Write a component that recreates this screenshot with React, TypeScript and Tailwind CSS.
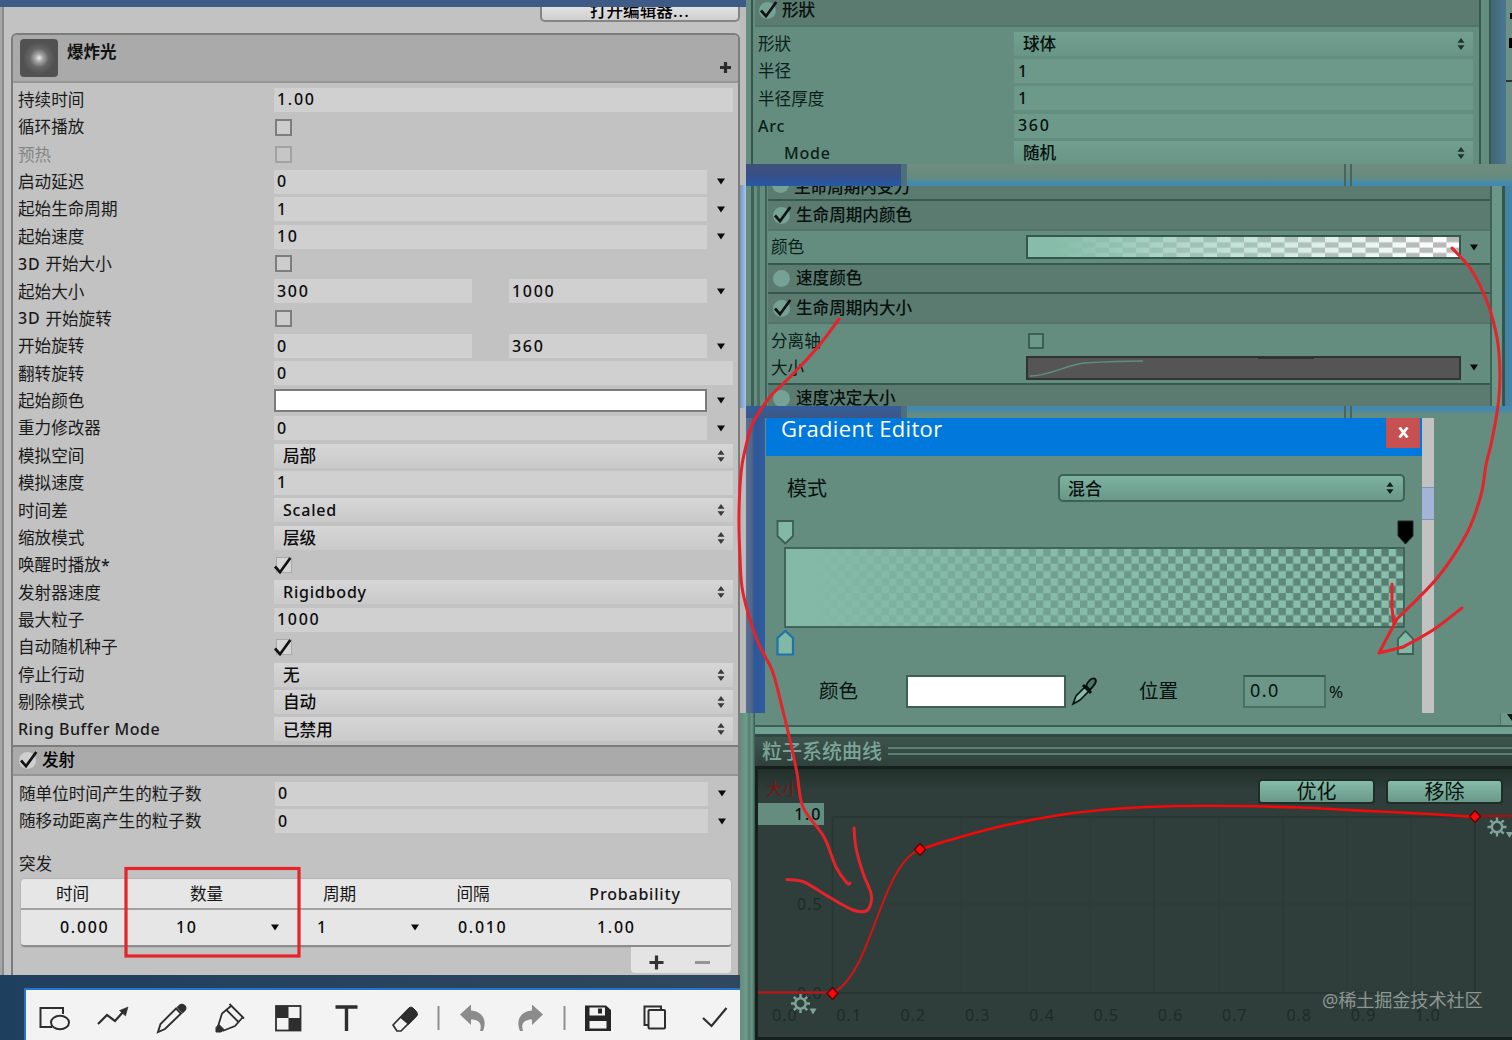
import React from "react";

type Pt = [number, number];

function smooth(p: Pt[]): string {
  let d = `M${p[0][0]} ${p[0][1]}`;
  for (let i = 0; i < p.length - 1; i++) {
    const a = p[i - 1] ?? p[i];
    const b = p[i];
    const c = p[i + 1];
    const e = p[i + 2] ?? c;
    d += `C${b[0] + (c[0] - a[0]) / 6} ${b[1] + (c[1] - a[1]) / 6} ${c[0] - (e[0] - b[0]) / 6} ${c[1] - (e[1] - b[1]) / 6} ${c[0]} ${c[1]}`;
  }
  return d;
}

const Down = () => (
  <svg className="h-[7px] w-[8px]" viewBox="0 0 8 7">
    <path d="M0 0.5H8L4 6.5Z" fill="#0b0b0b" />
  </svg>
);

const UpDown = ({ color = "#3a3a3a" }: { color?: string }) => (
  <svg className="h-[14px] w-[8px]" viewBox="0 0 8 14">
    <path d="M0.5 5.7L4 1L7.5 5.7ZM0.5 8.3L4 13L7.5 8.3Z" fill={color} />
  </svg>
);

const Tick = () => (
  <svg className="h-[19px] w-[19px]" viewBox="0 0 19 19">
    <path d="M2 10.5L7 16.2L17.3 2" fill="none" stroke="#101312" strokeWidth="2.7" />
  </svg>
);

type Kind = "input" | "curve" | "range" | "check" | "checked" | "popup" | "color" | "dim";
type RowData = { l: string; k: Kind; v?: string; v2?: string };

const rows: RowData[] = [
  { l: "持续时间", k: "input", v: "1.00" },
  { l: "循环播放", k: "check" },
  { l: "预热", k: "dim" },
  { l: "启动延迟", k: "curve", v: "0" },
  { l: "起始生命周期", k: "curve", v: "1" },
  { l: "起始速度", k: "curve", v: "10" },
  { l: "3D 开始大小", k: "check" },
  { l: "起始大小", k: "range", v: "300", v2: "1000" },
  { l: "3D 开始旋转", k: "check" },
  { l: "开始旋转", k: "range", v: "0", v2: "360" },
  { l: "翻转旋转", k: "input", v: "0" },
  { l: "起始颜色", k: "color" },
  { l: "重力修改器", k: "curve", v: "0" },
  { l: "模拟空间", k: "popup", v: "局部" },
  { l: "模拟速度", k: "input", v: "1" },
  { l: "时间差", k: "popup", v: "Scaled" },
  { l: "缩放模式", k: "popup", v: "层级" },
  { l: "唤醒时播放*", k: "checked" },
  { l: "发射器速度", k: "popup", v: "Rigidbody" },
  { l: "最大粒子", k: "input", v: "1000" },
  { l: "自动随机种子", k: "checked" },
  { l: "停止行动", k: "popup", v: "无" },
  { l: "剔除模式", k: "popup", v: "自动" },
  { l: "Ring Buffer Mode", k: "popup", v: "已禁用" },
];

/* Latin runs are spaced out, CJK runs are set solid. */
const Txt = ({ s }: { s: string }) => (
  <>
    {s.split(/([\u4e00-\u9fff]+)/).filter(Boolean).map((t, i) =>
      /[\u4e00-\u9fff]/.test(t) ? (
        <span key={i} className="relative top-[0.5px]">{t}</span>
      ) : /^[\d.]+$/.test(t) ? (
        <span key={i} className="text-[16px] font-medium tracking-[1.7px]">{t}</span>
      ) : t.length > 12 ? (
        <span key={i} className="text-[16px] font-medium tracking-[0.5px]">{t}</span>
      ) : (
        <span key={i} className="text-[16px] font-medium tracking-[0.8px]">{t}</span>
      )
    )}
  </>
);

const Box = ({ v, className = "" }: { v?: string; className?: string }) => (
  <div className={"flex h-[24px] items-center bg-[#d0d0d0] pb-px pl-[3px] text-[#0c0c0c] " + className}>
    <Txt s={v ?? ""} />
  </div>
);

function Field({ r }: { r: RowData }) {
  const arrow = (
    <div className="ml-[10px]">
      <Down />
    </div>
  );
  switch (r.k) {
    case "input":
      return <Box v={r.v} className="w-[459px]" />;
    case "curve":
      return (
        <div className="flex items-center">
          <Box v={r.v} className="w-[433px]" />
          {arrow}
        </div>
      );
    case "range":
      return (
        <div className="flex items-center">
          <Box v={r.v} className="mr-[37px] w-[198px]" />
          <Box v={r.v2} className="w-[198px]" />
          {arrow}
        </div>
      );
    case "color":
      return (
        <div className="flex items-center">
          <div className="h-[23px] w-[433px] border-2 border-[#7b7b7b] bg-white" />
          {arrow}
        </div>
      );
    case "popup":
      return (
        <div className="flex h-[24px] w-[459px] items-center justify-between bg-gradient-to-b from-[#d6d6d6] to-[#cacaca] pr-[8px] pl-[9px] font-medium text-[#0c0c0c]">
          <span>
            <Txt s={r.v ?? ""} />
          </span>
          <UpDown />
        </div>
      );
    case "checked":
      return (
        <div className="ml-[2px] flex h-[16px] w-[16px] items-center justify-center border border-[#a8a8a8] bg-[#d6d6d6]">
          <div className="-ml-[3px] shrink-0">
            <Tick />
          </div>
        </div>
      );
    case "dim":
      return <div className="ml-[1px] h-[17px] w-[17px] border-2 border-[#a2a2a2] bg-[#c6c6c6]" />;
    default:
      return <div className="ml-[1px] h-[17px] w-[17px] border-2 border-[#7d7d7d] bg-[#cdcdcd]" />;
  }
}

const Row = ({ r }: { r: RowData }) => (
  <div className="flex h-[27.39px] items-center">
    <div className={"w-[256px] whitespace-nowrap " + (r.k === "dim" ? "text-[#858585]" : "text-[#1a1a1a]")}>
      <Txt s={r.l} />
    </div>
    <Field r={r} />
  </div>
);

const Check = ({ on }: { on: boolean }) => (
  <div className="relative h-[17px] w-[17px] shrink-0 rounded-full bg-[#75a294]">
    {on && (
      <div className="absolute -top-[2px] left-0">
        <Tick />
      </div>
    )}
  </div>
);

const ic = { fill: "none", stroke: "#2e2e2e", strokeWidth: 2 };

function Toolbar() {
  return (
    <div className="flex h-[52px] w-[716px] border-t-2 border-l-2 border-[#2474c8] bg-[#f3f3f3]">
      <svg className="h-[50px] w-[714px]" viewBox="26 990 714 50">
        <g {...ic}>
          <path d="M52 1027H40.5V1008H63V1014" />
          <ellipse cx="60" cy="1022.500" rx="9" ry="6.800" />
          <path d="M98 1024L107 1015L115 1021L123 1012" strokeWidth="2.200" />
          <path d="M128 1007L125.500 1016L119.500 1010.500Z" fill="#2e2e2e" strokeWidth="0.500" />
          <path d="M158 1032L160.500 1024L176 1008.500L181 1013.500L165 1029Z" strokeWidth="1.900" />
          <path d="M177 1007.500Q181 1002 185 1005.500Q188 1009 182.500 1013Z" fill="#2e2e2e" strokeWidth="1" />
          <path d="M217.500 1028L222 1013.500L231 1006M222.500 1031L235 1026L242.500 1017.500" strokeWidth="1.800" />
          <path d="M229.500 1004L244 1018.500M226 1009.500L239 1022.500" strokeWidth="1.800" />
          <path d="M216 1032V1027.500L219 1024.500L224 1029.500L221 1032Z" fill="#2e2e2e" strokeWidth="1" />
          <rect x="276" y="1006" width="24.500" height="24.500" strokeWidth="1.800" />
          <path d="M276 1006H288.500V1018H276ZM288.500 1018H300.500V1030.500H288.500Z" fill="#2e2e2e" stroke="none" />
          <path d="M335.500 1007H357.500M346.500 1007V1031" strokeWidth="3.400" />
          <path d="M393 1025L409 1008.500L417 1015L401 1031H397Z" strokeWidth="1.700" strokeLinejoin="round" />
          <path d="M400.500 1017.500L409 1008Q411 1006 413 1008L416.500 1011.500Q418.500 1014 416 1016.500L408.500 1024.500Z" fill="#2e2e2e" strokeWidth="1" />
        </g>
        <path d="M438.500 1006V1030M564.500 1006V1030" stroke="#8f8f8f" strokeWidth="2" />
        <path d="M460 1014.500L471 1004.500V1010.500C481 1011 488 1019 483 1031H480C482.500 1023 478.500 1019.500 471 1019.500V1025Z" fill="#8b8b8b" />
        <path d="M543 1014.500L532 1004.500V1010.500C522 1011 515 1019 520 1031H523C520.500 1023 524.500 1019.500 532 1019.500V1025Z" fill="#8b8b8b" />
        <path fillRule="evenodd" d="M585 1005.500H606L611 1010V1031H585ZM589.500 1007.500V1015.500H605V1007.500ZM589.500 1021V1028.500H606.500V1021Z" fill="#262626" />
        <rect x="598" y="1008.500" width="4" height="5" fill="#262626" />
        <g {...ic} strokeWidth="2">
          <rect x="648.500" y="1010" width="16.500" height="18.500" rx="1" />
          <path d="M648 1025H644.500V1006.500H661V1010" />
          <path d="M703 1018L711.500 1026L726.500 1008" strokeWidth="2.200" />
        </g>
      </svg>
    </div>
  );
}

function LeftPanel() {
  return (
    <div className="flex h-[1040px] w-[740px] shrink-0 flex-col bg-gradient-to-r from-[#1f3f5e] to-[#30475f]">
      <div className="h-[7px] bg-[#3e5a86]" />
      <div className="flex h-[968px] bg-[#c2c2c2]">
        <div className="h-full w-[4px] border-r-2 border-[#8a8a8a] bg-[#a5a5a5]" />
        <div className="flex w-[736px] flex-col pl-[7px]">
          <div className="flex h-[26px] justify-end">
            <div className="flex h-[15px] w-[200px] items-end justify-center overflow-hidden rounded-b-[5px] border-2 border-t-0 border-[#858585] bg-gradient-to-b from-[#e2e2e2] to-[#cfcfcf] leading-[19px] font-medium text-black">
              打开编辑器<span className="tracking-[1.2px]">...</span>
            </div>
          </div>
          <div className="flex h-[942px] flex-col rounded-t-[6px] border-2 border-b-0 border-[#7c7c7c]">
            <div className="flex h-[48px] shrink-0 justify-between rounded-t-[4px] border-b-2 border-[#969696] bg-[#aaaaaa] pr-[6px] pl-[7px]">
              <div className="flex">
                <div className="mt-[4px] h-[38px] w-[38px] rounded-[4px] bg-[radial-gradient(circle,#ededed_0%,#a5a5a5_15%,#666_35%,#515151_60%)]" />
                <div className="ml-[9px] pt-[6px] text-[16.5px] leading-[22px] font-bold text-[#111]">爆炸光</div>
              </div>
              <svg className="mt-[26px] h-[13px] w-[13px]" viewBox="0 0 13 13">
                <path d="M6.500 1V12M1 6.500H12" stroke="#2b2b2b" strokeWidth="3.200" />
              </svg>
            </div>
            <div className="flex h-[662px] shrink-0 flex-col pt-[3px] pl-[5px]">
              {rows.map((r) => (
                <Row key={r.l} r={r} />
              ))}
            </div>
            <div className="flex h-[31px] shrink-0 items-center border-t-2 border-b-2 border-t-[#7c7c7c] border-b-[#959595] bg-[#aaaaaa] pl-[6px]">
              <div className="h-[17px] w-[17px] rounded-full bg-[#cfcfcf]">
                <div className="-mt-[2px]">
                  <Tick />
                </div>
              </div>
              <div className="ml-[6px] font-medium text-black">发射</div>
            </div>
            <div className="flex shrink-0 flex-col pt-[4px] pl-[6px]">
              <div className="flex flex-col">
                <Row r={{ l: "随单位时间产生的粒子数", k: "curve", v: "0" }} />
                <Row r={{ l: "随移动距离产生的粒子数", k: "curve", v: "0" }} />
              </div>
              <div className="mt-[16px] h-[26px] pt-px leading-[24px] text-[#1d1d1d]">突发</div>
            </div>
            <Bursts />
          </div>
        </div>
      </div>
      <div className="h-[13px]" />
      <div className="pl-[24px]">
        <Toolbar />
      </div>
    </div>
  );
}

function Bursts() {
  return (
    <div className="mt-[2px] ml-[8px] w-[710px]">
      <div className="rounded-[4px] border-b-2 border-[#8b8b8b] bg-[#e6e6e6] shadow-[0_0_0_1px_#b5b5b5]">
        <div className="flex h-[31px] items-center border-b-2 border-[#a2a2a2] pt-[2px] text-[#151515]">
          <div className="w-[103px] text-center">时间</div>
          <div className="w-[165px] text-center">数量</div>
          <div className="w-[101px] text-center">周期</div>
          <div className="w-[166px] text-center">间隔</div>
          <div className="w-[158px] text-center">
            <Txt s="Probability" />
          </div>
        </div>
        <div className="flex h-[35px] items-center text-[#0c0c0c]">
          <div className="w-[115px] pl-[39px]"><Txt s="0.000" /></div>
          <div className="flex w-[181px] items-center justify-between pr-[38px] pl-[40px]">
            <Txt s="10" />
            <Down />
          </div>
          <div className="flex w-[141px] items-center justify-between pr-[39px]">
            <Txt s="1" />
            <Down />
          </div>
          <div className="w-[139px]"><Txt s="0.010" /></div>
          <Txt s="1.00" />
        </div>
      </div>
      <div className="flex justify-end">
        <div className="flex h-[26px] w-[100px] items-center justify-between rounded-b-[4px] bg-[#e4e4e4] pt-[6px] pr-[21px] pl-[18px]">
          <svg className="h-[15px] w-[15px]" viewBox="0 0 15 15">
            <path d="M7.500 0.500V14.500M0.500 7.500H14.500" stroke="#333" strokeWidth="3.200" />
          </svg>
          <div className="h-[3px] w-[15px] bg-[#949494]" />
        </div>
      </div>
    </div>
  );
}

const Popup2 = ({ v }: { v: string }) => (
  <div className="flex h-[24px] w-[459px] items-center justify-between bg-gradient-to-b from-[#729f90] to-[#699586] pr-[8px] pl-[9px]">
    <span className="pt-px font-medium">{v}</span>
    <UpDown color="#1d332c" />
  </div>
);
const Input2 = ({ v }: { v: string }) => (
  <div className="flex h-[24px] w-[459px] items-center bg-[#6d998b] pb-px pl-[4px]">
    <Txt s={v} />
  </div>
);

function ShapePanel() {
  const items: [string, React.ReactNode][] = [
    ["形狀", <Popup2 v="球体" />],
    ["半径", <Input2 v="1" />],
    ["半径厚度", <Input2 v="1" />],
    ["Arc", <Input2 v="360" />],
    ["Mode", <Popup2 v="随机" />],
  ];
  return (
    <div className="flex h-[164px] bg-[#648c7f] text-[#07110e]">
      <div className="w-[7px] border-r-2 border-[#35564c]" />
      <div className="flex h-full w-[728px] flex-col border-r-2 border-[#365a4f] pl-[2px]">
        <div className="flex h-[27px] shrink-0 items-center border-b-2 border-[#50766a] bg-[#5b7a70] pb-[4px] pl-[4px]">
          <Check on />
          <span className="ml-[6px] font-medium">形狀</span>
        </div>
        <div className="flex flex-col pt-[3px]">
          {items.map(([l, f]) => (
            <div key={l} className="flex h-[27.400px] shrink-0 items-center">
              <div className={"w-[259px] text-[#0a1f19] " + (l === "Mode" ? "pl-[29px]" : "pl-[3px]")}>
                <Txt s={l} />
              </div>
              {f}
            </div>
          ))}
        </div>
      </div>
      <div className="w-[10px] border-r-2 border-[#365a4f]" />
      <div className="w-[15px] bg-gradient-to-r from-[#416772] to-[#4b7890]" />
      <div className="flex w-[6px] flex-col items-end bg-[#6f9183] pt-[13px]">
        <div className="h-[6px] w-[2px] bg-black" />
        <div className="mt-[19px] h-[10px] w-[3px] bg-black" />
        <div className="mt-[32px] h-[2px] w-[6px] bg-[#2a3431]" />
      </div>
    </div>
  );
}

function Divider({ low }: { low?: boolean }) {
  return (
    <div className={"flex " + (low ? "h-[12px]" : "h-[22px]")}>
      <div className={"bg-gradient-to-b " + (low ? "w-[155px] from-[#315e9c] to-[#3e5682]" : "w-[155px] from-[#3f5178] via-[#374f87] to-[#2359a8]")} />
      <div className="w-[6px] bg-[#4c6f7c]" />
      <div className={"flex grow pl-[437px] " + (low ? "bg-gradient-to-b from-[#4488ac] from-30% to-[#648c7f] to-70%" : "bg-gradient-to-b from-[#6f8d80] via-[#668b7e] via-60% to-[#4089b0] to-90%")}>
        <div className="h-full w-[8px] border-x-2 border-[#47675e]" />
      </div>
    </div>
  );
}

const Head = ({ on, t, className }: { on: boolean; t: string; className: string }) => (
  <div className={"flex shrink-0 items-center rounded-[2px] bg-[#5b7a70] pl-[5px] font-medium " + className}>
    <Check on={on} />
    <span className="ml-[6px]">{t}</span>
  </div>
);

const bar = "h-[2px] shrink-0 bg-[#35584d]";

function LifePanel() {
  return (
    <div className="flex h-[220px] bg-[#648c7f] text-[#07110e]">
      <div className="w-[8px] border-r-3 border-[#3f6055]" />
      <div className="mx-[3px] w-[3px] bg-[#4a6f63]" />
      <div className="w-[2px]" />
      <div className="flex w-[727px] flex-col overflow-hidden border-x-2 border-[#3e6257] pl-px">
        <div className="flex h-[13px] shrink-0 overflow-hidden bg-[#5b7a70] pl-[4px] font-medium">
          <div className="-mt-[10px]"><Check on={false} /></div>
          <span className="-mt-[11px] ml-[5px] leading-[24px]">生命周期内受力</span>
        </div>
        <div className={bar} />
        <Head on t="生命周期内颜色" className="h-[28px] pr-px" />
        <div className="flex h-[34px] shrink-0 items-center border-t-2 border-[#527568] pl-[3px]">
          <div className="w-[255px] pt-px text-[#0a1f19]">颜色</div>
          <div className="h-[24px] w-[435px] border-2 border-[#35574c] bg-white">
            <svg className="h-[20px] w-[431px]" viewBox="0 0 431 20">
              <defs>
                <pattern id="ck1" width="27" height="10.600" patternUnits="userSpaceOnUse">
                  <rect width="27" height="10.600" fill="#ffffff" />
                  <path d="M13.500 0H27V5.300H13.500ZM0 5.300H13.500V10.600H0Z" fill="#b8b8b8" />
                </pattern>
                <linearGradient id="fd1">
                  <stop offset="0.06" stopColor="#86bca9" />
                  <stop offset="1" stopColor="#a8dcc9" stopOpacity="0" />
                </linearGradient>
              </defs>
              <rect width="431" height="20" fill="url(#ck1)" />
              <rect width="431" height="20" fill="url(#fd1)" />
            </svg>
          </div>
          <div className="ml-[9px]"><Down /></div>
        </div>
        <div className={bar} />
        <Head on={false} t="速度颜色" className="h-[27px]" />
        <div className={bar} />
        <Head on t="生命周期内大小" className="h-[28px]" />
        <div className="flex h-[61px] shrink-0 flex-col border-t-2 border-[#527568] pt-[3px] pl-[3px] text-[#0a1f19]">
          <div className="flex h-[27px] items-center">
            <div className="w-[257px] pt-px">分离轴</div>
            <div className="h-[16px] w-[16px] border-2 border-[#3d6055] bg-[#6c9889]" />
          </div>
          <div className="flex h-[27px] items-center">
            <div className="w-[255px] pt-[2px]">大小</div>
            <div className="h-[24px] w-[435px] border-2 border-[#2f3533] bg-[#555555]">
              <svg className="h-[20px] w-[431px]" viewBox="0 0 431 20">
                <path d="M2 18C22 18 38 7 56 5Q90 3 115 3" fill="none" stroke="#5f8f81" strokeWidth="1.500" />
                <path d="M230 0.500H286" stroke="#2f3533" strokeWidth="1" />
              </svg>
            </div>
            <div className="ml-[9px]"><Down /></div>
          </div>
        </div>
        <div className={bar} />
        <Head on={false} t="速度决定大小" className="h-[26px]" />
      </div>
      <div className="w-[13px] border-r-3 border-[#31564b] bg-[#6a9788]" />
      <div className="grow bg-[#4583a3]" />
    </div>
  );
}

const stopFill = "#82b8a6";

function GradientEditor() {
  return (
    <div className="flex h-[295px] bg-[#648c7f] text-[#07110e]">
      <div className="w-[19px] bg-[linear-gradient(90deg,#586f92_0%,#52658a_30%,#2d5796_45%,#2f5ca2_100%)]" />
      <div className="w-px bg-[#648c7f]" />
      <div className="flex w-[656px] flex-col">
        <div className="flex h-[38px] shrink-0 justify-between bg-[#0078dc] pr-[2px] pl-[15px]">
          <div className="-mt-[6px] font-['Open_Sans','Noto_Sans',sans-serif] text-[22px] leading-[32px] font-medium tracking-[0.3px] text-white">Gradient Editor</div>
          <div className="flex h-[30px] w-[34px] items-center justify-center bg-[#c75050] pb-[2px]">
            <svg className="h-[11px] w-[11px]" viewBox="0 0 11 11">
              <path d="M1.500 0.500L9.500 10.500M9.500 0.500L1.500 10.500" stroke="#fff" strokeWidth="2.800" />
            </svg>
          </div>
        </div>
        <div className="mt-[18px] flex h-[28px] shrink-0 items-center justify-between pr-[17px] pl-[21px]">
          <span className="pt-[2px] text-[20px]">模式</span>
          <div className="flex h-[28px] w-[347px] items-center justify-between rounded-[5px] border-2 border-[#3c6155] bg-gradient-to-b from-[#7db3a1] to-[#699787] pr-[9px] pl-[8px]">
            <span className="pt-px text-[17px] font-medium">混合</span>
            <UpDown color="#0d1d18" />
          </div>
        </div>
        <svg className="mt-[14px] h-[144px] w-[656px] shrink-0" viewBox="766 516 656 144">
          <defs>
            <pattern id="ck2" x="786" y="549" width="14.700" height="14.700" patternUnits="userSpaceOnUse">
              <rect width="14.700" height="14.700" fill="#89bfac" />
              <path d="M7.350 0H14.700V7.350H7.350ZM0 7.350H7.350V14.700H0Z" fill="#567c6f" />
            </pattern>
            <linearGradient id="fd2">
              <stop offset="0.04" stopColor="#84b9a7" />
              <stop offset="1" stopColor="#84b9a7" stopOpacity="0" />
            </linearGradient>
          </defs>
          <rect x="785" y="548" width="619" height="79" fill="url(#ck2)" />
          <rect x="785" y="548" width="619" height="79" fill="url(#fd2)" stroke="#3b5f54" strokeWidth="1.800" />
          <path d="M777.500 521H793V536L785.300 543.500L777.500 536Z" fill={stopFill} stroke="#3b5f54" strokeWidth="1.800" />
          <path d="M1398 521H1413V536L1405.500 544L1398 536Z" fill="#000" stroke="#1c2b26" />
          <path d="M777.500 654.500V638L785.300 631L793 638V654.500Z" fill={stopFill} stroke="#1c74aa" strokeWidth="2.200" />
          <path d="M1398 654V639L1405.500 631L1413 639V654Z" fill={stopFill} stroke="#3b5f54" strokeWidth="1.800" />
        </svg>
        <div className="mt-[14px] flex h-[34px] items-center pl-[53px]">
          <span className="w-[87px] text-[19.500px]">颜色</span>
          <div className="h-[33px] w-[160px] border-2 border-[#3d5f55] bg-white" />
          <svg className="ml-[4px] h-[32px] w-[28px]" viewBox="0 0 28 32">
            <path d="M3 29L6 21L16 11L20 15L10 25Z" fill="#86bca9" stroke="#07110e" strokeWidth="1.600" />
            <path d="M13 10L21 18" stroke="#07110e" strokeWidth="3" />
            <path d="M16 11C18 6 22 2 25 4C28 7 23 11 20 15Z" fill="#4f7568" stroke="#07110e" strokeWidth="1.800" />
          </svg>
          <span className="ml-[41px] w-[104px] text-[19.500px]">位置</span>
          <div className="flex h-[33px] w-[83px] items-center border-2 border-[#4a6f63] border-t-[#35574c] bg-[#6b9788] pb-[2px] pl-[5px] text-[18px] tracking-[1.500px]">0.0</div>
          <span className="ml-[3px] text-[17px]">%</span>
        </div>
      </div>
      <div className="flex w-[12px] flex-col bg-[#c2c2c2]">
        <div className="mt-[69px] h-[33px] border-y border-[#8293b5] bg-[#a4b4d6]" />
      </div>
      <div className="grow" />
    </div>
  );
}

const Gear = ({ x, y }: { x: number; y: number }) => (
  <g transform={`translate(${x} ${y})`} stroke="#7fa398" fill="none">
    <circle r="5.200" strokeWidth="2.500" />
    <path d="M0 -9.500V-6M0 9.500V6M-9.500 0H-6M9.500 0H6M-6.700 -6.700L-4.300 -4.300M6.700 6.700L4.300 4.300M-6.700 6.700L-4.300 4.300M6.700 -6.700L4.300 -4.300" strokeWidth="2.400" />
    <path d="M9 5H16L12.500 11Z" fill="#7fa398" stroke="none" />
  </g>
);

const Key = ({ x, y }: { x: number; y: number }) => (
  <path d={`M${x} ${y - 6}L${x + 5.500} ${y}L${x} ${y + 6}L${x - 5.500} ${y}Z`} fill="#fb0808" stroke="#5a0707" strokeWidth="1.500" />
);

const curve = smooth([
  [920, 849.5], [950, 840], [1000, 826.500], [1060, 815], [1120, 808.500], [1180, 806], [1240, 806], [1300, 807.500], [1370, 811], [1430, 814], [1475, 817],
]);

function CurvePanel() {
  return (
    <div className="flex h-[327px] bg-[#2f3e3a]">
      <div className="w-[15px] bg-[linear-gradient(90deg,#648c7f_0%,#6d9b8c_45%,#557d70_60%,#6a9587_80%,#35584d_100%)]" />
      <div className="flex w-[757px] flex-col">
        <div className="flex h-[12px] shrink-0 justify-end bg-[#648c7f]">
          <div className="flex w-[12px] items-start justify-end overflow-hidden border-l border-[#507468] bg-[#6d998b] pt-px">
            <svg className="h-[7px] w-[5px]" viewBox="0 0 5 7"><path d="M0 0H10L5 7Z" fill="#0b1512" /></svg>
          </div>
        </div>
        <div className="h-[9px] shrink-0 border-t-2 border-[#3c5f54] bg-[#70a091]" />
        <div className="flex h-[32px] shrink-0 items-center gap-[6px] border-t-3 border-[#2f4942] bg-gradient-to-b from-[#3d544d] to-[#2f403b] pl-[7px]">
          <span className="text-[20px] font-medium text-[#7ba598]">粒子系统曲线</span>
          <div className="-mt-[2px] h-[8px] grow border-y-2 border-[#5d8072]" />
        </div>
        <div className="relative h-[274px] overflow-hidden border-t-3 border-l-3 border-[#15201d]">
          <svg className="h-[271px] w-[754px]" viewBox="758 769 754 271">
            <defs>
              <linearGradient id="shade" x1="0" y1="0" x2="0" y2="1">
                <stop offset="0" stopColor="#22302c" />
                <stop offset="1" stopColor="#2f3e3a" />
              </linearGradient>
            </defs>
            <rect x="758" y="769" width="754" height="22" fill="url(#shade)" />
            <g stroke="#283531" strokeWidth="1.500">
              <path d="M832.500 817V993M1475 817V993M832.500 817H1475M832.500 993H1475" />
              <path d="M1154 817V993M1283 817V993" strokeOpacity="0.600" />
              <path d="M961 817V993M1026 817V993M1090 817V993M1219 817V993M1347 817V993M1411 817V993M832.500 904H1475" strokeOpacity="0.200" />
            </g>
            <g fill="#1f2b27" fontSize="16" letterSpacing="1">
              {["0.0", "0.1", "0.2", "0.3", "0.4", "0.5", "0.6", "0.7", "0.8", "0.9", "1.0"].map((t, i) => (
                <text key={t} x={772 + i * 64.300} y="1021">{t}</text>
              ))}
              <text x="797" y="910">0.5</text>
              <text x="797" y="999">0.0</text>
            </g>
            <text x="766" y="795" fill="#7d1414" fontSize="17">大小</text>
            <path d="M758 992.500H832" stroke="#b01a1a" strokeWidth="2.500" />
            <path d="M1475 816H1512" stroke="#a01212" strokeWidth="2.500" />
            <path d="M832.500 993C872 975 880 865 920 849.500" fill="none" stroke="#d81212" strokeWidth="2" />
            <path d={curve} fill="none" stroke="#f40808" strokeWidth="2.700" />
            <Key x={832.5} y={993.5} />
            <Key x={920} y={849.5} />
            <Key x={1475} y={816.5} />
            <Gear x={800.5} y={1003.5} />
            <Gear x={1497} y={827} />
            <text x="1322" y="1007" fill="#8c9693" fontSize="18.200" letterSpacing="-0.150">@稀土掘金技术社区</text>
          </svg>
          <div className="absolute top-[34px] left-0 flex h-[22px] w-[66px] items-center justify-end bg-[#648c7f] pr-[2px] text-[#07110e]">
            <Txt s="1.0" />
          </div>
          <div className="absolute top-[10px] right-[9px] flex gap-[11px] text-[20px] text-[#07110e]">
            {["优化", "移除"].map((t) => (
              <div key={t} className="flex h-[25px] w-[117px] items-center justify-center rounded-[4px] border-2 border-[#1f2d29] bg-gradient-to-b from-[#86bca9] to-[#6a9888]">
                {t}
              </div>
            ))}
          </div>
          <div className="absolute bottom-0 left-0 h-[3px] w-full bg-[#15201d]" />
        </div>
      </div>
    </div>
  );
}

function Annotations() {
  return (
    <svg className="pointer-events-none absolute inset-0 h-[1040px] w-[1512px]" viewBox="0 0 1512 1040" fill="none" stroke="#e6222a" strokeWidth="3" strokeLinecap="round" strokeLinejoin="round">
      <rect x="126" y="868.500" width="173" height="87.500" strokeWidth="3.200" strokeLinejoin="miter" />
      <path d={smooth([[839, 319], [817, 348], [790, 377], [770, 397], [753, 423], [745, 450], [741, 473], [739, 515], [740, 557], [743, 593], [757, 640], [772, 670], [781, 703], [790, 740], [797, 773], [803, 807], [824, 837], [836, 867], [847, 883], [850, 883]])} />
      <path d={smooth([[854, 828], [856, 848], [863, 873], [871, 893], [871, 903], [866, 911], [853, 910], [829, 897], [804, 882], [787, 879.500]])} />
      <path d={smooth([[1452, 248], [1470, 268], [1483, 292], [1493, 320], [1499, 353], [1499, 397], [1492, 440], [1486, 465], [1481, 495], [1467, 533], [1438, 577], [1397, 619]]) + "L1379 653L1403 647"} />
      <path d={smooth([[1403, 647], [1433, 630], [1462, 608]])} />
      <path d="M1392 584L1392 608L1394 624" />
    </svg>
  );
}

export default function App() {
  return (
    <div className="relative flex h-[1040px] w-[1512px] overflow-hidden font-['Noto_Sans','Noto_Sans_CJK_SC',sans-serif] text-[16.600px] leading-none whitespace-nowrap">
      <LeftPanel />
      <div className="flex w-[772px] flex-col">
        <div className="flex h-[713px]">
          <div className="flex w-[6px] flex-col">
            <div className="h-[7px] bg-[#3e5a86]" />
            <div className="h-[178px] bg-[#bdbcbc]" />
            <div className="h-[223px] bg-gradient-to-r from-[#7795bd] to-[#a5c5eb]" />
            <div className="h-[305px] bg-[#bdbcbc]" />
          </div>
          <div className="flex w-[766px] flex-col">
            <ShapePanel />
            <Divider />
            <LifePanel />
            <Divider low />
            <GradientEditor />
          </div>
        </div>
        <CurvePanel />
      </div>
      <Annotations />
    </div>
  );
}
